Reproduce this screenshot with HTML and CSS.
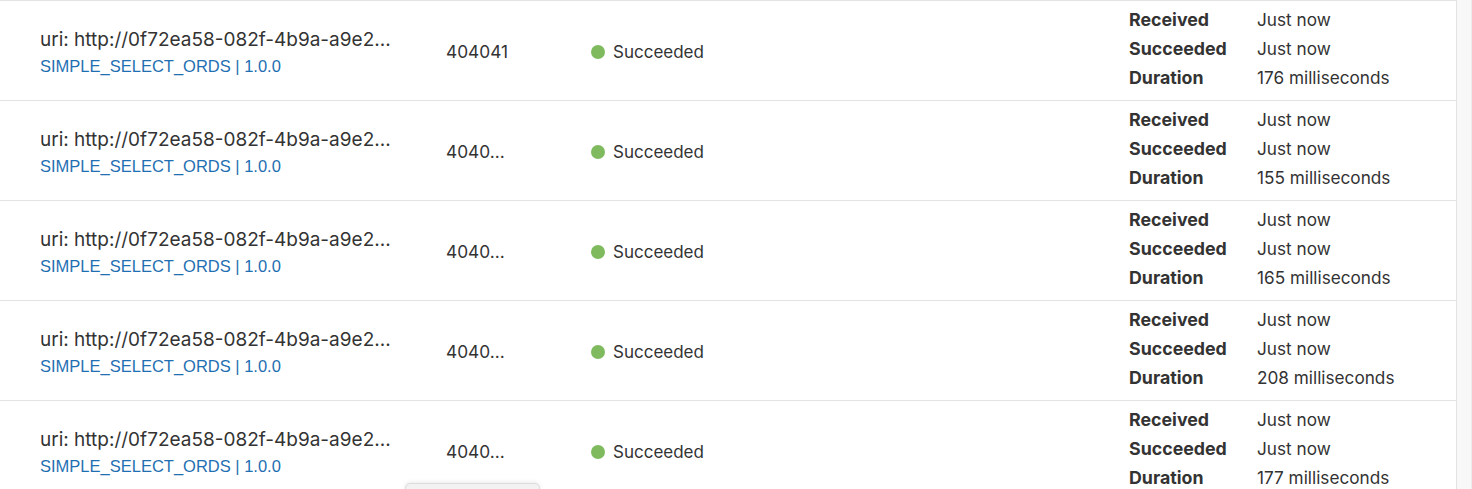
FILE: index.html
```html
<!DOCTYPE html>
<html>
<head>
<meta charset="utf-8">
<link rel="stylesheet" href="styles.css">
</head>
<body>
<div class="page">
  <div class="table">
    <div class="row">
      <div class="cell name">
        <div class="uri">uri: http://0f72ea58-082f-4b9a-a9e2...</div>
        <a class="app">SIMPLE_SELECT_ORDS | 1.0.0</a>
      </div>
      <div class="cell id">404041</div>
      <div class="cell status"><span class="dot"></span>Succeeded</div>
      <div class="cell details">
        <div class="k">Received</div><div class="v">Just now</div>
        <div class="k">Succeeded</div><div class="v">Just now</div>
        <div class="k">Duration</div><div class="v">176 milliseconds</div>
      </div>
    </div>
    <div class="row">
      <div class="cell name">
        <div class="uri">uri: http://0f72ea58-082f-4b9a-a9e2...</div>
        <a class="app">SIMPLE_SELECT_ORDS | 1.0.0</a>
      </div>
      <div class="cell id">4040...</div>
      <div class="cell status"><span class="dot"></span>Succeeded</div>
      <div class="cell details">
        <div class="k">Received</div><div class="v">Just now</div>
        <div class="k">Succeeded</div><div class="v">Just now</div>
        <div class="k">Duration</div><div class="v">155 milliseconds</div>
      </div>
    </div>
    <div class="row">
      <div class="cell name">
        <div class="uri">uri: http://0f72ea58-082f-4b9a-a9e2...</div>
        <a class="app">SIMPLE_SELECT_ORDS | 1.0.0</a>
      </div>
      <div class="cell id">4040...</div>
      <div class="cell status"><span class="dot"></span>Succeeded</div>
      <div class="cell details">
        <div class="k">Received</div><div class="v">Just now</div>
        <div class="k">Succeeded</div><div class="v">Just now</div>
        <div class="k">Duration</div><div class="v">165 milliseconds</div>
      </div>
    </div>
    <div class="row">
      <div class="cell name">
        <div class="uri">uri: http://0f72ea58-082f-4b9a-a9e2...</div>
        <a class="app">SIMPLE_SELECT_ORDS | 1.0.0</a>
      </div>
      <div class="cell id">4040...</div>
      <div class="cell status"><span class="dot"></span>Succeeded</div>
      <div class="cell details">
        <div class="k">Received</div><div class="v">Just now</div>
        <div class="k">Succeeded</div><div class="v">Just now</div>
        <div class="k">Duration</div><div class="v">208 milliseconds</div>
      </div>
    </div>
    <div class="row">
      <div class="cell name">
        <div class="uri">uri: http://0f72ea58-082f-4b9a-a9e2...</div>
        <a class="app">SIMPLE_SELECT_ORDS | 1.0.0</a>
      </div>
      <div class="cell id">4040...</div>
      <div class="cell status"><span class="dot"></span>Succeeded</div>
      <div class="cell details">
        <div class="k">Received</div><div class="v">Just now</div>
        <div class="k">Succeeded</div><div class="v">Just now</div>
        <div class="k">Duration</div><div class="v">177 milliseconds</div>
      </div>
    </div>
  </div>
  <div class="scroll"></div>
  <div class="tab"></div>
</div>
</body>
</html>
```

FILE: styles.css
```css
html, body {
  margin: 0;
  padding: 0;
  background: #fff;
  overflow: hidden;
}
body {
  font-family: Inter, "Liberation Sans", Arial, sans-serif;
  color: #333;
}
.page {
  position: relative;
  display: flex;
  width: 1472px;
  height: 489px;
  overflow: hidden;
}
.table {
  width: 1457px;
  border-top: 1px solid #e3e3e3;
  border-right: 1px solid #e3e3e3;
  box-sizing: border-box;
  flex: none;
}
.scroll {
  flex: 1;
  background: #f8f8f8;
  border-right: 1px solid #ececec;
}
.row {
  display: grid;
  grid-template-columns: 406px 145px 538px 1fr;
  align-items: center;
  height: 100px;
  padding-left: 40px;
  border-bottom: 1px solid #e3e3e3;
  box-sizing: border-box;
}
.uri {
  font-size: 19px;
  line-height: 26px;
  color: #333;
}
.app {
  display: block;
  font-family: "Liberation Sans", Arial, sans-serif;
  font-size: 16.5px;
  line-height: 26px;
  color: #1f6fb2;
}
.name {
  padding-top: 4px;
}
.id {
  font-size: 17.3px;
  padding-top: 2px;
}
.status {
  display: flex;
  align-items: center;
  font-size: 17px;
  padding-top: 2px;
}
.dot {
  width: 14px;
  height: 14px;
  border-radius: 50%;
  background: #7fbb5e;
  margin-right: 8px;
}
.details {
  display: grid;
  grid-template-columns: 128px 1fr;
  font-size: 17.2px;
  line-height: 29px;
  margin-top: -4px;
}
.k {
  font-weight: 700;
  font-size: 17.8px;
}
.tab {
  position: absolute;
  left: 405px;
  top: 483px;
  width: 133px;
  height: 12px;
  background: #f2f2f2;
  border: 1px solid #dcdcdc;
  border-radius: 5px 5px 0 0;
  box-shadow: 0 -1px 4px rgba(0,0,0,0.08);
}
```
